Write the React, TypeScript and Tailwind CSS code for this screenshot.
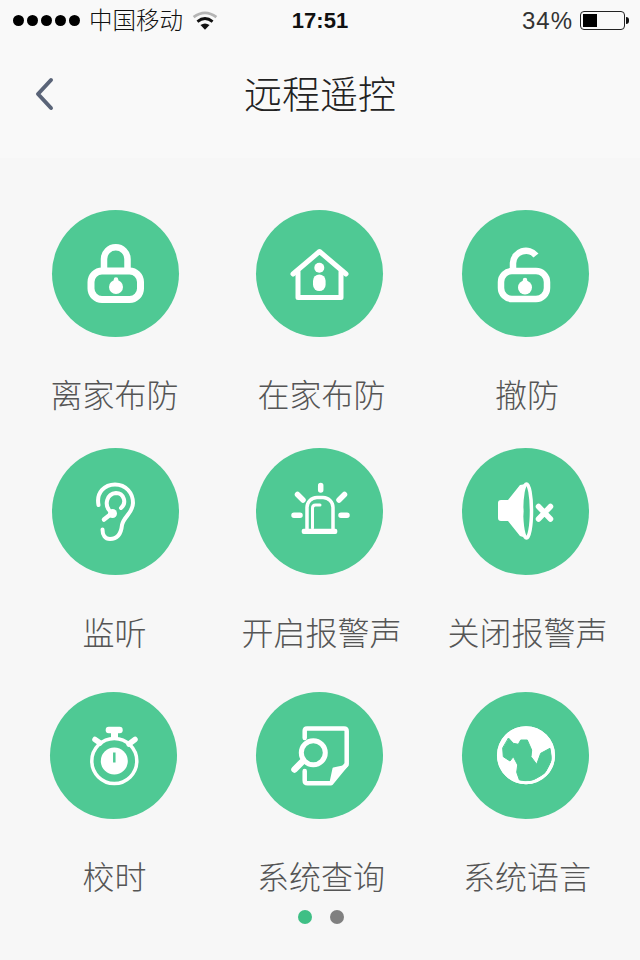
import React from "react";

const G = "#4fc994";
const W = "#ffffff";

function Svg({ children }: { children: React.ReactNode }) {
  return (
    <svg viewBox="0 0 127 127" className="w-full h-full" fill="none" stroke={W} strokeLinecap="round" strokeLinejoin="round">
      {children}
    </svg>
  );
}

const Lock = () => (
  <Svg>
    <path d="M52 58V49a11.75 11.75 0 0 1 23.5 0V58" strokeWidth="6.5" />
    <rect x="39" y="61" width="49.5" height="28.5" rx="11" strokeWidth="7" />
    <circle cx="64" cy="77" r="7" fill={W} stroke="none" />
    <path d="M64 69.5V74" strokeWidth="4.5" />
  </Svg>
);
const House = () => (
  <Svg>
    <path d="M37 64L63.5 41.5L90 64" strokeWidth="5" />
    <path d="M42 62V87.5H85V62" strokeWidth="5" />
    <circle cx="63.3" cy="57.7" r="5" fill={W} stroke="none" />
    <rect x="57" y="64.5" width="12.6" height="16.5" rx="6.3" fill={W} stroke="none" />
  </Svg>
);
const Unlock = () => (
  <Svg>
    <path d="M51 60V53A13 13 0 0 1 74 45.5" strokeWidth="6.5" strokeLinecap="butt" />
    <rect x="39" y="61" width="46" height="28" rx="11" strokeWidth="6.5" />
    <circle cx="63" cy="77.5" r="7" fill={W} stroke="none" />
    <path d="M63 70V74" strokeWidth="4.5" />
  </Svg>
);
const Ear = () => (
  <Svg>
    <path d="M46.5 57C44 44 53 36.5 63 36.5C74 36.5 81 45 81 55C81 65 72 68 70 77C69 87 65 91 58 91C53 91 50.5 87 50.5 81.5" strokeWidth="4" />
    <path d="M57 62C53 57 54 46 64 45C72 45 75 55 69 60" strokeWidth="4" />
    <path d="M52 71.5L59 66" strokeWidth="4.5" />
    <circle cx="60.5" cy="65.5" r="4.5" fill={W} stroke="none" />
  </Svg>
);
const Alarm = () => (
  <Svg>
    <rect x="45.7" y="80.7" width="35.6" height="5.4" rx="2" fill={W} stroke="none" />
    <path d="M51 81V60A10 10 0 0 1 61 49.5H67A10 10 0 0 1 77 60V81" strokeWidth="3.5" />
    <path d="M56.5 80V60Q56.5 57 59.5 57H64" strokeWidth="3" />
    <path d="M64.7 37.5V42M41.5 46.5L47 52M88.5 46.5L83 52M38 67.3H44M85 67.3H91" strokeWidth="5.5" />
  </Svg>
);
const Mute = () => (
  <Svg>
    <path d="M39 52H46L58 37L64 36V90L58 88L46 73H39Q36 73 36 70V55Q36 52 39 52Z" fill={W} stroke="none" />
    <ellipse cx="64.5" cy="63" rx="5" ry="27" fill={G} strokeWidth="3.5" />
    <path d="M60 55Q63 63 60 72L56 72V55Z" fill={W} stroke="none" />
    <path d="M76.5 58.5L88.5 71M88.5 58.5L76.5 71" strokeWidth="5.5" />
  </Svg>
);
const Watch = () => (
  <Svg>
    <rect x="55.7" y="34.7" width="17" height="6.6" rx="3" fill={W} stroke="none" />
    <path d="M61 40H68V47H61Z" fill={W} stroke="none" />
    <circle cx="64.3" cy="69" r="22.5" strokeWidth="3.5" />
    <circle cx="64.3" cy="69" r="13.5" fill={W} stroke="none" />
    <path d="M64.3 60.5V70.5" stroke={G} strokeWidth="2.5" strokeLinecap="butt" />
    <path d="M45 47.5L50 51M85 47.5L79 52" strokeWidth="5.5" />
  </Svg>
);
const Doc = () => (
  <Svg>
    <path d="M48.7 46V39Q48.7 36.5 51 36.5H88Q90.7 36.5 90.7 39V72L75 91.3H51.5Q48.7 91.3 48.7 88.5V79" strokeWidth="4.5" />
    <path d="M74.5 90.5L77.5 76.5L91.5 73.5Z" fill={W} strokeWidth="2" />
    <circle cx="57.3" cy="60.7" r="12" strokeWidth="5" />
    <path d="M45.7 70.3L38.5 77.5" strokeWidth="6.5" />
  </Svg>
);
const Globe = () => (
  <Svg>
    <circle cx="64" cy="63.3" r="29" fill={W} stroke="none" />
    <path
      d="M46.7 46.3L51.3 51.3L56.3 52.3L58.7 48L65.3 48L69.7 58L69 64.7L74.7 72.3L78.7 61.3L88 56.3L89.7 68L83 81.3L71.3 88L58 89.7L54.7 80.3L55.7 73L51.3 64.7L48 69L41.3 64.7L40.7 56.3Z"
      fill={G}
      stroke={G}
      strokeWidth="1"
    />
    <circle cx="64" cy="63.3" r="27.5" strokeWidth="3" />
  </Svg>
);

function Cell({ label, icon, nudge = "" }: { label: string; icon: React.ReactNode; nudge?: string }) {
  return (
    <div className="w-[159px] flex flex-col items-center">
      <div className="w-[127px] h-[127px] rounded-full bg-[#4fc994]">{icon}</div>
      <div className={`mt-[39px] h-[39px] leading-[40px] text-[32px] font-light text-[#555555] whitespace-nowrap ${nudge}`}>{label}</div>
    </div>
  );
}

export default function App() {
  return (
    <div
      className="w-[640px] h-[960px] overflow-hidden bg-[#f7f7f7]"
      style={{ fontFamily: '"Liberation Sans", "Noto Sans CJK SC", sans-serif' }}
    >
      <header className="h-[158px] bg-[#f9f9f9]">
        <div className="h-[40px] grid grid-cols-[1fr_auto_1fr] items-center text-[#111111]">
          <div className="flex items-center pl-[13px]">
            <div className="flex gap-[3px]">
              {[0, 1, 2, 3, 4].map((i) => (
                <span key={i} className="w-[11px] h-[11px] rounded-full bg-black" />
              ))}
            </div>
            <span className="ml-[9px] mt-[1px] text-[23.5px] font-light leading-[40px]">中国移动</span>
            <svg width="26" height="20" viewBox="0 0 24 18" className="ml-[9px]" fill="none">
              <path d="M1.5 5.5Q12 -2.5 22.5 5.5" stroke="#b5b5b5" strokeWidth="2.6" />
              <path d="M5 9.5Q12 4 19 9.5" stroke="#111111" strokeWidth="2.6" />
              <path d="M7.8 12.6Q12 9.8 16.2 12.6L12 17Z" fill="#111111" />
            </svg>
          </div>
          <div className="text-[22px] font-bold leading-[40px] mt-[1px]">17:51</div>
          <div className="flex items-center justify-end pr-[11px]">
            <span className="text-[24px] leading-[40px] tracking-[1px] mt-[1px] text-[#333333]">34%</span>
            <div className="ml-[7px] w-[45px] h-[19px] rounded-[4px] border border-[#222222] p-[2px] flex">
              <div className="w-[14px] bg-black" />
            </div>
            <div className="w-[3px] h-[7px] ml-[1px] rounded-r-[3px] bg-[#111111]" />
          </div>
        </div>
        <div className="h-[110px] grid grid-cols-[1fr_auto_1fr] items-center">
          <div className="pl-[33px]">
            <svg width="24" height="36" viewBox="0 0 24 36" fill="none" className="block">
              <path d="M18 3L5 17L18 31" stroke="#5a6478" strokeWidth="4" strokeLinecap="round" strokeLinejoin="round" />
            </svg>
          </div>
          <h1 className="text-[38px] leading-[50px] font-light text-[#222222]">远程遥控</h1>
          <div />
        </div>
      </header>

      <main className="pt-[52px]">
        <div className="flex pl-[36px] gap-x-[45px]">
          <Cell label="离家布防" icon={<Lock />} nudge="pr-[2px]" />
          <Cell label="在家布防" icon={<House />} nudge="pl-[4px]" />
          <div className="ml-[2px]">
            <Cell label="撤防" icon={<Unlock />} nudge="pl-[3px]" />
          </div>
        </div>
        <div className="flex pl-[36px] gap-x-[45px] mt-[33px]">
          <Cell label="监听" icon={<Ear />} nudge="pr-[2px]" />
          <Cell label="开启报警声" icon={<Alarm />} nudge="pl-[4px]" />
          <div className="ml-[2px]">
            <Cell label="关闭报警声" icon={<Mute />} nudge="pl-[4px]" />
          </div>
        </div>
        <div className="flex pl-[34px] mt-[39px]">
          <Cell label="校时" icon={<Watch />} nudge="pl-[2px]" />
          <div className="ml-[47px]">
            <Cell label="系统查询" icon={<Doc />} nudge="pl-[3px]" />
          </div>
          <div className="ml-[47px]">
            <Cell label="系统语言" icon={<Globe />} nudge="pl-[3px]" />
          </div>
        </div>
        <div className="flex justify-center gap-[18px] mt-[13px] pl-[2px]">
          <span className="w-[14px] h-[14px] rounded-full bg-[#3fbf85]" />
          <span className="w-[14px] h-[14px] rounded-full bg-[#808080]" />
        </div>
      </main>
    </div>
  );
}
